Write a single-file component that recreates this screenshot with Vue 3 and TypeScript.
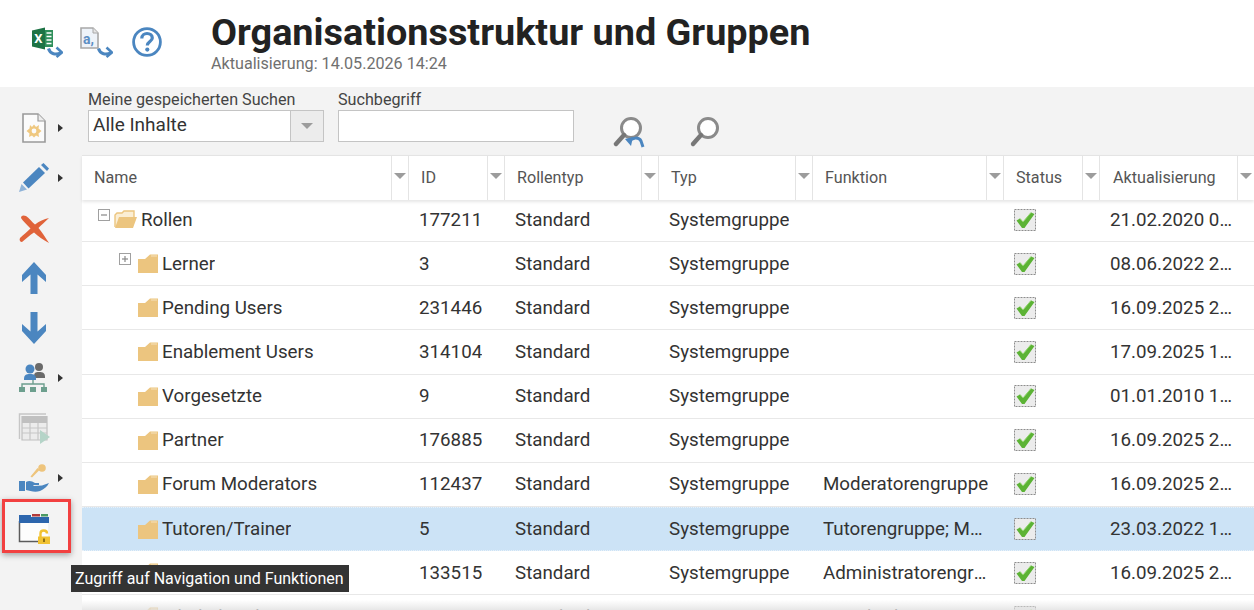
<script setup lang="ts">
interface Row {
  name: string
  id: string
  fn?: string
  date: string
  level: number
  expander?: 'minus' | 'plus'
  open?: boolean
  selected?: boolean
}

const columns = ['Name', 'ID', 'Rollentyp', 'Typ', 'Funktion', 'Status', 'Aktualisierung']

const rows: Row[] = [
  { name: 'Rollen', id: '177211', date: '21.02.2020 08:15', level: 0, expander: 'minus', open: true },
  { name: 'Lerner', id: '3', date: '08.06.2022 21:10', level: 1, expander: 'plus' },
  { name: 'Pending Users', id: '231446', date: '16.09.2025 21:44', level: 1 },
  { name: 'Enablement Users', id: '314104', date: '17.09.2025 10:12', level: 1 },
  { name: 'Vorgesetzte', id: '9', date: '01.01.2010 12:00', level: 1 },
  { name: 'Partner', id: '176885', date: '16.09.2025 21:44', level: 1 },
  { name: 'Forum Moderators', id: '112437', fn: 'Moderatorengruppe', date: '16.09.2025 21:44', level: 1 },
  { name: 'Tutoren/Trainer', id: '5', fn: 'Tutorengruppe; Moderatorengruppe', date: '23.03.2022 13:20', level: 1, selected: true },
  { name: 'Administratoren', id: '133515', fn: 'Administratorengruppe', date: '16.09.2025 21:44', level: 1 },
  { name: 'Inhaltsbearbeiter', id: '11', fn: 'Standard', date: '01.01.2010 12:00', level: 1 },
]
</script>

<template>
  <div class="page">
    <header class="top">
      <div class="top-icons">
        <svg class="ti ti-xl" viewBox="0 0 32 32">
          <path d="M1 3.500 L14 0.500 V22.500 L1 19.500Z" fill="#1d7345" />
          <path d="M14 3 H22 V20 H14Z" fill="#2f8f5b" />
          <path d="M15.500 6h5M15.500 9.500h5M15.500 13h5M15.500 16.500h5" stroke="#fff" stroke-width="1.500" />
          <text x="3.200" y="16" class="xl-x">X</text>
          <path d="M17.500 21.500 C19 27 25 28.500 30 25.500" fill="none" stroke="#4b86c0" stroke-width="3" />
          <path d="M25.500 20.500 L31 25.500 L25.500 30" fill="none" stroke="#4b86c0" stroke-width="2.600" />
        </svg>
        <svg class="ti ti-doc" viewBox="0 0 33 32">
          <path d="M1 1 H13 L18 6 V21 H1Z" fill="#eef3f9" stroke="#a8a8a8" stroke-width="1.600" />
          <path d="M13 1 V6 H18" fill="#e5e5e5" stroke="#a8a8a8" stroke-width="1" />
          <text x="3" y="17" class="doc-a">a,</text>
          <path d="M18.500 21.500 C20 27 26 28.500 31 25.500" fill="none" stroke="#4b86c0" stroke-width="3" />
          <path d="M26.500 20.500 L32 25.500 L26.500 30" fill="none" stroke="#4b86c0" stroke-width="2.600" />
        </svg>
        <svg class="ti ti-help" viewBox="0 0 30 30">
          <circle cx="15" cy="15" r="13.400" fill="none" stroke="#4b86c0" stroke-width="2.800" />
          <path d="M9.800 11.500 C9.800 8 12.500 6.500 15 6.500 C18.200 6.500 20.300 8.400 20.300 11 C20.300 14.500 15.300 14.600 15.300 18.500" fill="none" stroke="#4b86c0" stroke-width="3.200" />
          <circle cx="15.300" cy="22.600" r="2.100" fill="#4b86c0" />
        </svg>
      </div>
      <div class="heading">
        <h1>Organisationsstruktur und Gruppen</h1>
        <p>Aktualisierung: 14.05.2026 14:24</p>
      </div>
    </header>

    <div class="body">
      <aside class="side">
        <div class="tool">
          <svg class="ic" viewBox="0 0 26 32">
            <path d="M2 2 H17 L24 9 V30 H2Z" fill="#fbfbfb" stroke="#9a9a9a" stroke-width="1.600" />
            <path d="M17 2 V9 H24" fill="#ededed" stroke="#9a9a9a" stroke-width="1.200" />
            <path d="M9 13 L11 15 L13 12.500 L15 15 L18 13 L17.500 16.500 L20.500 19 L17.500 21.500 L18 25 L15 23.500 L13 25.500 L11 23.500 L8 25 L8.500 21.500 L5.500 19 L8.500 16.500Z" fill="#efc880" />
            <circle cx="13" cy="19" r="2.400" fill="#fbfbfb" />
          </svg>
          <i class="caret"></i>
        </div>
        <div class="tool">
          <svg class="ic" viewBox="0 0 32 32">
            <path d="M1 30 L3.500 22 L9 27.500Z" fill="#8fb3d8" />
            <path d="M5 20.500 L21 5 L27 11 L10.500 26.500Z" fill="#4b86c0" />
            <path d="M23 3 L25.500 1 L31 6.500 L29 9Z" fill="#4b86c0" />
          </svg>
          <i class="caret"></i>
        </div>
        <div class="tool">
          <svg class="ic" viewBox="0 0 32 32">
            <path d="M3 6 C3 3 6 3 8 4 C11 6 14 10 17 12.500 C21 9.500 26 7 31 6 C27 10 23 13 20.500 16 C24 20 27 25 31 31 C25 28 20 24 16 20.500 C12 23 8 27 4 30 C2 30 1 28 2 26 C5 23 9 20 12.500 16.500 C9 13 5 9 3 6Z" fill="#e0633a" />
          </svg>
        </div>
        <div class="tool">
          <svg class="ic" viewBox="0 0 32 32">
            <path d="M16 0 L28 13 V20 L19.500 12.500 V32 H12.500 V12.500 L4 20 V13Z" fill="#4b86c0" />
          </svg>
        </div>
        <div class="tool">
          <svg class="ic" viewBox="0 0 32 32">
            <path d="M16 32 L28 19 V12 L19.500 19.500 V0 H12.500 V19.500 L4 12 V19Z" fill="#4b86c0" />
          </svg>
        </div>
        <div class="tool">
          <svg class="ic" viewBox="0 0 32 32">
            <circle cx="21" cy="5" r="4" fill="#6a6a6a" />
            <path d="M16 15 C16 11 17 10 21 10 C25 10 27 11 27 15 V16 H16Z" fill="#6a6a6a" />
            <circle cx="12" cy="7" r="4.500" fill="#4b86c0" />
            <path d="M6 17 C6 13 8 12 12 12 C16 12 18 13 18 17 V18 H6Z" fill="#4b86c0" />
            <path d="M15 18 V22 M4 25 V22 H26 V25" fill="none" stroke="#6d9f8e" stroke-width="1.400" />
            <path d="M1 25 H7 V30 H1Z M12 25 H18 V30 H12Z M23 25 H29 V30 H23Z" fill="#6d9f8e" />
          </svg>
          <i class="caret"></i>
        </div>
        <div class="tool">
          <svg class="ic" viewBox="0 0 32 32">
            <path d="M1.500 27 V2 H28" fill="none" stroke="#c6c6c6" stroke-width="1.400" />
            <path d="M4 4.500 H29 V28 H4Z" fill="#ececec" stroke="#c0c0c0" stroke-width="1.200" />
            <path d="M4 5 H29 V11 H4Z" fill="#c0c0c0" />
            <path d="M4 16 H29 M4 21 H29 M12 11 V28 M20 11 V28" stroke="#c6c6c6" stroke-width="1.200" />
            <path d="M22 18 L32 25 L22 32Z" fill="#b5d4c8" />
          </svg>
        </div>
        <div class="tool">
          <svg class="ic" viewBox="0 0 32 32">
            <path d="M1 19 H7 V29 H1Z" fill="#4b86c0" />
            <path d="M8 20 C11 18 14 19 17 21 H21 V23 H15 L16 24 L24 23.500 L31 21 C29 25 26 27 22 29 C17 30.500 12 29 8 28Z" fill="#4b86c0" />
            <circle cx="24" cy="6" r="3.800" fill="#eec47c" />
            <path d="M21.500 8 L14 15.500 L12.500 14.500 L15 11.500 L19.500 6Z" fill="#eec47c" />
          </svg>
          <i class="caret"></i>
        </div>
        <div class="tool lock">
          <svg class="ic" viewBox="0 0 32 32">
            <path d="M1.500 9 V30 H30 V9Z" fill="#fdfdfd" />
            <path d="M1.500 9 V29.500 H22" fill="none" stroke="#5b5b5b" stroke-width="1.500" />
            <path d="M1 3 H13 V5 H31 V11 H1Z" fill="#2d66ad" />
            <path d="M14 2 H22 V4.500 H14Z" fill="#b23a3a" />
            <path d="M23 2 H30 V4.500 H23Z" fill="#4b9a64" />
            <path d="M22.500 25 V21.500 C22.500 17.500 29 17.500 29 21.500" fill="none" stroke="#f1c232" stroke-width="2.400" />
            <path d="M20 24.500 H32 V32 H20Z" fill="#f1c232" />
            <path d="M26 26.500 V30" stroke="#7a5d10" stroke-width="1.600" />
          </svg>
        </div>
      </aside>

      <main class="main">
        <div class="filters">
          <div class="field">
            <label>Meine gespeicherten Suchen</label>
            <div class="select">
              <span>Alle Inhalte</span>
              <b><i class="arrow"></i></b>
            </div>
          </div>
          <div class="field">
            <label>Suchbegriff</label>
            <input class="input" type="text" />
          </div>
          <svg class="search first" viewBox="0 0 32 32">
            <circle cx="18" cy="12" r="9.500" fill="#fff" stroke="#8a8a8a" stroke-width="3" />
            <path d="M11 19 L3 28" stroke="#777" stroke-width="4.400" stroke-linecap="round" />
            <path d="M16 26 C19 21 26 21 28 25 L30 31" fill="none" stroke="#4b86c0" stroke-width="3" />
            <path d="M12 23 L20 21 L18 30Z" fill="#4b86c0" />
          </svg>
          <svg class="search" viewBox="0 0 32 32">
            <circle cx="19" cy="12" r="9.500" fill="#fff" stroke="#8a8a8a" stroke-width="3" />
            <path d="M12 19 L4 28" stroke="#777" stroke-width="4.400" stroke-linecap="round" />
          </svg>
        </div>

        <div class="table">
          <div class="grid head">
            <div v-for="col in columns" :key="col" class="hcell">
              <span class="hlabel">{{ col }}</span>
              <span class="hsort"><i class="arrow"></i></span>
            </div>
          </div>
          <div v-for="row in rows" :key="row.id" class="grid row" :class="{ selected: row.selected }">
            <div class="cell namecell" :class="'level' + row.level">
              <span class="exp-slot">
                <svg v-if="row.expander" class="exp" viewBox="0 0 12 12">
                  <rect x="0.500" y="0.500" width="11" height="11" fill="#fff" stroke="#a0a0a0" />
                  <path d="M3 6 H9" stroke="#888" stroke-width="1.200" />
                  <path v-if="row.expander === 'plus'" d="M6 3 V9" stroke="#888" stroke-width="1.200" />
                </svg>
              </span>
              <svg v-if="row.open" class="folder open" viewBox="0 0 23 19">
                <path d="M1 17 V5 L3 3 H8 L10 1 H20 V7" fill="#fbeed4" stroke="#ecc57f" stroke-width="1.400" />
                <path d="M1 18 L5 7 H23 L19 18Z" fill="#ecc57f" />
              </svg>
              <svg v-else class="folder" viewBox="0 0 20 19">
                <path d="M0 5 H7 L12 0.500 H20 V19 H0Z" fill="#ecc57f" />
                <path d="M13 2 H19" stroke="#f6e2bd" stroke-width="1" />
              </svg>
              <span class="text">{{ row.name }}</span>
            </div>
            <div class="cell"><span class="text">{{ row.id }}</span></div>
            <div class="cell"><span class="text">Standard</span></div>
            <div class="cell"><span class="text">Systemgruppe</span></div>
            <div class="cell fn"><span class="text">{{ row.fn }}</span></div>
            <div class="cell">
              <svg class="check" viewBox="0 0 22 22">
                <rect x="0.500" y="0.500" width="21" height="21" fill="#ececec" stroke="#8d8d8d" stroke-dasharray="2 1" />
                <path d="M2.500 11.500 L6 9.500 L9 13 L17 3.500 L20.500 5 L10.500 19 L8 19Z" fill="#5cb335" />
                <path d="M6 9.500 L9 13 L17 3.500" fill="none" stroke="#8fd46a" stroke-width="1" />
              </svg>
            </div>
            <div class="cell date"><span class="text">{{ row.date }}</span></div>
          </div>
          <div class="fade"></div>
        </div>
      </main>
    </div>

    <div class="tooltip">Zugriff auf Navigation und Funktionen</div>
  </div>
</template>

<style>
html, body { margin: 0; padding: 0; background: #fff; }
</style>

<style scoped>
.page {
  position: relative;
  width: 1254px;
  height: 610px;
  overflow: hidden;
  display: flex;
  flex-direction: column;
  font-family: Roboto, "Liberation Sans", sans-serif;
  color: #333;
  background: #f3f3f3;
}
.top {
  height: 87px;
  flex: none;
  background: #fff;
  display: flex;
  box-sizing: border-box;
  padding-top: 12px;
}
.top-icons {
  width: 211px;
  flex: none;
  display: flex;
  align-items: flex-start;
  padding: 15px 0 0 31px;
  box-sizing: border-box;
}
.ti { display: block; height: 32px; }
.ti-xl { width: 32px; margin-right: 17px; }
.ti-doc { width: 33px; margin-right: 19px; }
.ti-help { width: 30px; height: 30px; }
.xl-x { font: 700 13px Roboto, sans-serif; fill: #fff; }
.doc-a { font: 700 14px Roboto, sans-serif; fill: #5d8fc4; }
.heading h1 {
  margin: 0;
  font-size: 37.8px;
  line-height: 40px;
  font-weight: 700;
  color: #222;
}
.heading p {
  margin: 2px 0 0;
  font-size: 16.15px;
  line-height: 20px;
  color: #707070;
}
.body { flex: 1; display: flex; min-height: 0; }
.side {
  width: 81px;
  flex: none;
  box-sizing: border-box;
  padding-top: 16px;
  display: flex;
  flex-direction: column;
}
.tool {
  position: relative;
  height: 50px;
  display: flex;
  align-items: center;
}
.ic { width: 32px; height: 32px; margin-left: 18px; display: block; }
.caret {
  position: absolute;
  left: 58px;
  top: 21px;
  width: 0;
  height: 0;
  border-left: 5px solid #333;
  border-top: 4px solid transparent;
  border-bottom: 4px solid transparent;
}
.lock::after {
  content: "";
  position: absolute;
  left: 2px;
  top: -4px;
  width: 63px;
  height: 48px;
  border: 3px solid #f24040;
  box-shadow: 0 2px 6px rgba(0, 0, 0, 0.35);
  pointer-events: none;
}
.main { flex: 1; min-width: 0; display: flex; flex-direction: column; }
.filters {
  height: 68px;
  flex: none;
  display: flex;
  align-items: flex-start;
  padding-left: 7px;
  box-sizing: border-box;
}
.field { display: flex; flex-direction: column; margin-right: 14px; }
.field label {
  font-size: 16.15px;
  line-height: 19px;
  margin-top: 3px;
  margin-bottom: 1px;
  color: #444;
}
.select {
  width: 236px;
  height: 32px;
  box-sizing: border-box;
  border: 1px solid #c4c4c4;
  background: #fff;
  display: flex;
  align-items: center;
  font-size: 19px;
  padding-left: 4px;
  color: #333;
}
.select span { flex: 1; margin-top: -3px; }
.select b {
  width: 32px;
  height: 100%;
  background: #ececec;
  border-left: 1px solid #c4c4c4;
  display: flex;
  align-items: center;
  justify-content: center;
}
.input {
  width: 236px;
  height: 32px;
  box-sizing: border-box;
  border: 1px solid #c4c4c4;
  background: #fff;
  padding: 0;
  outline: none;
  display: block;
}
.search { width: 32px; height: 32px; margin-top: 29px; flex: none; }
.search.first { margin-left: 25px; margin-right: 44px; }
.arrow {
  display: block;
  width: 0;
  height: 0;
  border-left: 6.5px solid transparent;
  border-right: 6.5px solid transparent;
  border-top: 6.5px solid #9c9c9c;
}
.table { position: relative; flex: 1; margin-left: 1px; background: #fff; min-height: 0; }
.grid {
  display: grid;
  grid-template-columns: 326px 96px 154px 154px 191px 96px 155px;
}
.head {
  position: relative;
  z-index: 2;
  height: 45px;
  margin-bottom: -2px;
  padding-left: 1px;
  background: #fff;
  border-top: 1px solid #e4e4e4;
  box-sizing: border-box;
  box-shadow: 0 2px 3px rgba(0, 0, 0, 0.1);
}
.hcell { display: flex; min-width: 0; }
.hlabel {
  flex: 1;
  padding-left: 12px;
  font-size: 16.15px;
  line-height: 43px;
  color: #555;
  white-space: nowrap;
}
.hcell:first-child .hlabel { padding-left: 11px; }
.hcell:last-child .hlabel { padding-left: 13px; }
.hsort {
  width: 16px;
  flex: none;
  border-left: 1px solid #e4e4e4;
  border-right: 1px solid #e4e4e4;
  display: flex;
  justify-content: center;
  padding-top: 17px;
  box-sizing: content-box;
}
.hsort .arrow { flex: none; }
.row {
  height: 44.15px;
  box-sizing: border-box;
  border-bottom: 1px solid #e8e8e8;
}
.row.selected {
  background: #cce3f6;
  border-top: 1px dotted #e8f1f9;
  border-bottom: 1px dotted #e8f1f9;
}
.cell {
  min-width: 0;
  display: flex;
  align-items: center;
  padding-left: 11px;
  padding-right: 14px;
  font-size: 18.75px;
  overflow: hidden;
}
.cell.date { padding-right: 18px; }
.text {
  display: block;
  min-width: 0;
  white-space: nowrap;
  overflow: hidden;
  text-overflow: ellipsis;
}
.namecell.level0 { padding-left: 16px; }
.namecell.level1 { padding-left: 37px; }
.exp-slot { width: 12px; flex: none; display: flex; margin-top: -9px; }
.exp { width: 12px; height: 12px; display: block; }
.folder { width: 20px; height: 19px; flex: none; margin-left: 7px; margin-right: 4px; }
.folder.open { width: 23px; margin-left: 4px; margin-right: 4px; }
.check { width: 22px; height: 22px; display: block; flex: none; }
.fade {
  position: absolute;
  left: 0;
  right: 0;
  bottom: 0;
  height: 10px;
  background: linear-gradient(rgba(235, 235, 235, 0), rgba(225, 225, 225, 0.8));
  pointer-events: none;
  z-index: 3;
}
.tooltip {
  position: absolute;
  left: 71px;
  top: 565px;
  width: 278px;
  height: 27px;
  box-sizing: border-box;
  padding-left: 4px;
  background: #333;
  color: #fff;
  font-size: 16px;
  line-height: 27px;
  white-space: nowrap;
  z-index: 5;
}
</style>
